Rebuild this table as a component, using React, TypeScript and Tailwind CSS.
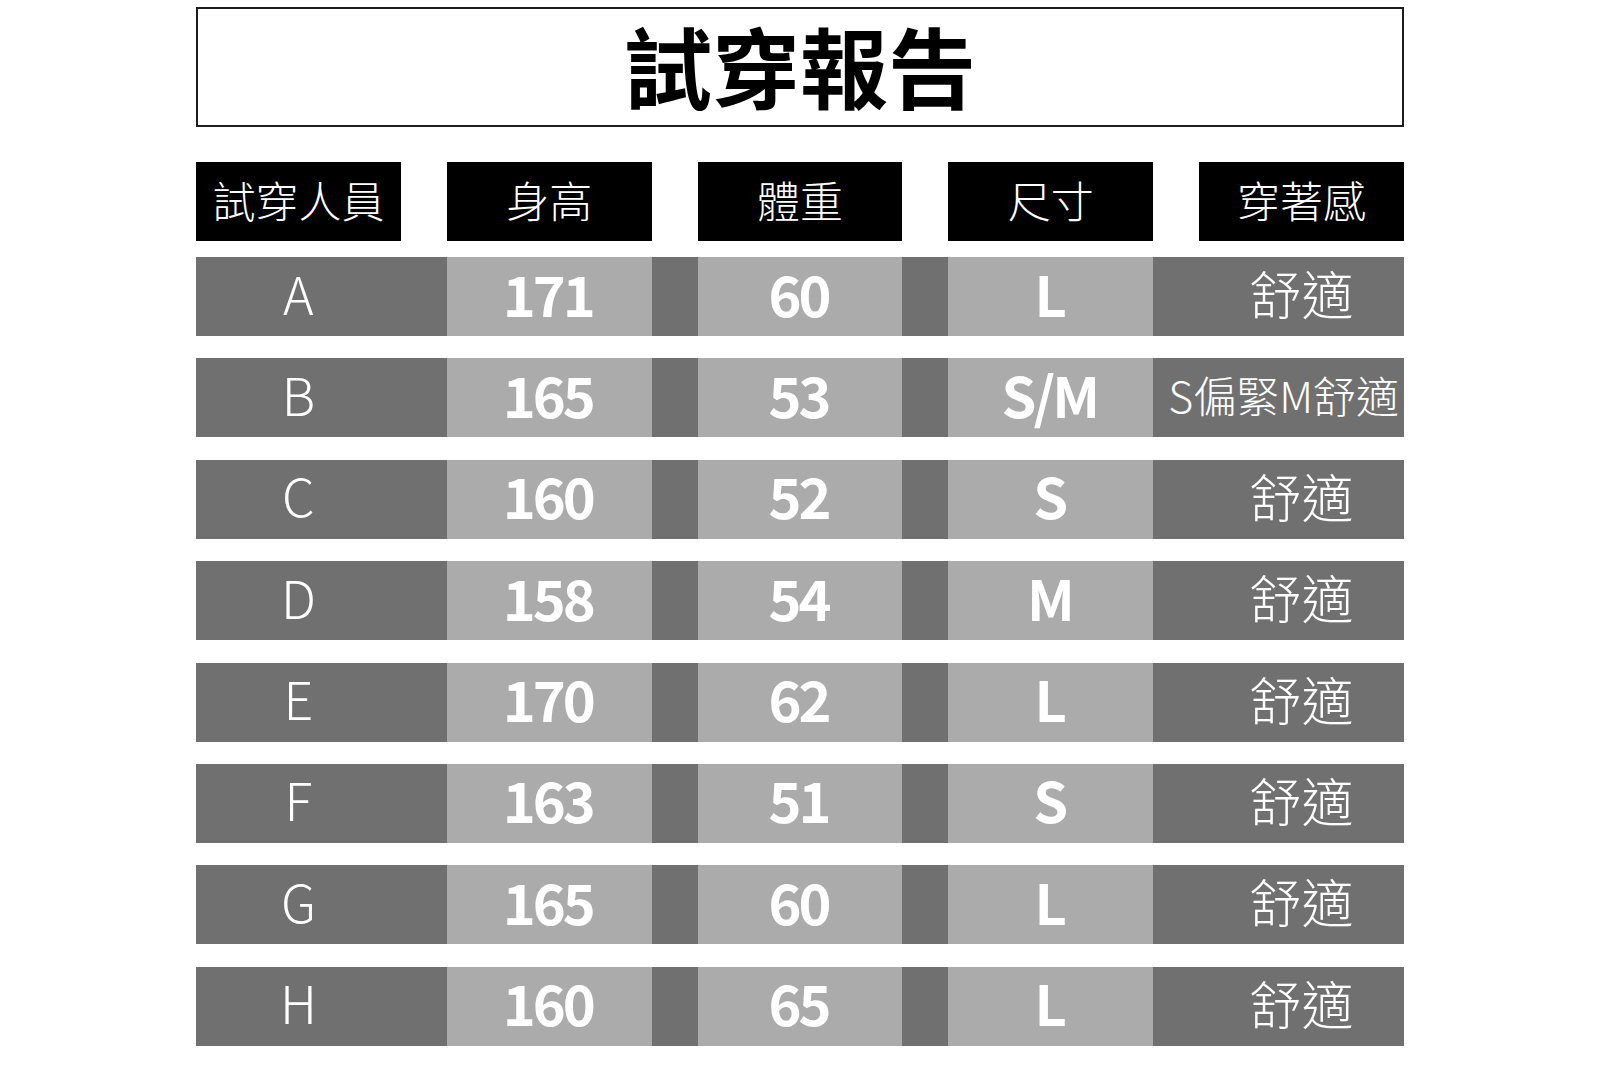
import React from "react";

type Row = { id: string; h: string; w: string; size: string; feel: string };

const rows: Row[] = [
  { id: "A", h: "171", w: "60", size: "L", feel: "舒適" },
  { id: "B", h: "165", w: "53", size: "S/M", feel: "S偏緊M舒適" },
  { id: "C", h: "160", w: "52", size: "S", feel: "舒適" },
  { id: "D", h: "158", w: "54", size: "M", feel: "舒適" },
  { id: "E", h: "170", w: "62", size: "L", feel: "舒適" },
  { id: "F", h: "163", w: "51", size: "S", feel: "舒適" },
  { id: "G", h: "165", w: "60", size: "L", feel: "舒適" },
  { id: "H", h: "160", w: "65", size: "L", feel: "舒適" },
];

const headers = ["試穿人員", "身高", "體重", "尺寸", "穿著感"];

function NumCell({ value }: { value: string }) {
  return (
    <div className="bg-[#ababab] flex items-center justify-center pb-[8px]">
      <span className="text-[56px] font-bold leading-none text-white tracking-[-3px] pr-[3px]">{value}</span>
    </div>
  );
}

export default function App() {
  return (
    <div className="w-[1606px] h-[1080px] bg-white font-['Noto_Sans_CJK_TC','Noto_Sans_CJK_SC',sans-serif] overflow-hidden">
      <div className="ml-[196px] w-[1208px] pt-[7px]">
        <div className="h-[120px] border-2 border-[#1e1e1e] flex items-center justify-center pb-[7px]">
          <span className="text-[88px] font-bold leading-none text-black">試穿報告</span>
        </div>

        <div className="mt-[35px] grid grid-cols-5 gap-x-[46px]">
          {headers.map((h) => (
            <div key={h} className="h-[79px] bg-black flex items-center justify-center pb-[4px]">
              <span className="text-[43px] font-light leading-none text-white">{h}</span>
            </div>
          ))}
        </div>

        <div className="mt-[16px] flex flex-col gap-y-[22.4px]">
          {rows.map((r) => (
            <div key={r.id} className="h-[79px] bg-[#707070] grid grid-cols-5 gap-x-[46px]">
              <div className="flex items-center justify-center pb-[8px]">
                <span className="text-[52px] font-light leading-none text-white">{r.id}</span>
              </div>
              <NumCell value={r.h} />
              <NumCell value={r.w} />
              <NumCell value={r.size} />
              {r.feel.length > 2 ? (
                <div className="flex items-center justify-center pr-[36px] pb-[6px]">
                  <span className="text-[43px] font-light leading-none text-white whitespace-nowrap">{r.feel}</span>
                </div>
              ) : (
                <div className="flex items-center justify-center pb-[7px]">
                  <span className="text-[52px] font-light leading-none text-white">{r.feel}</span>
                </div>
              )}
            </div>
          ))}
        </div>
      </div>
    </div>
  );
}
